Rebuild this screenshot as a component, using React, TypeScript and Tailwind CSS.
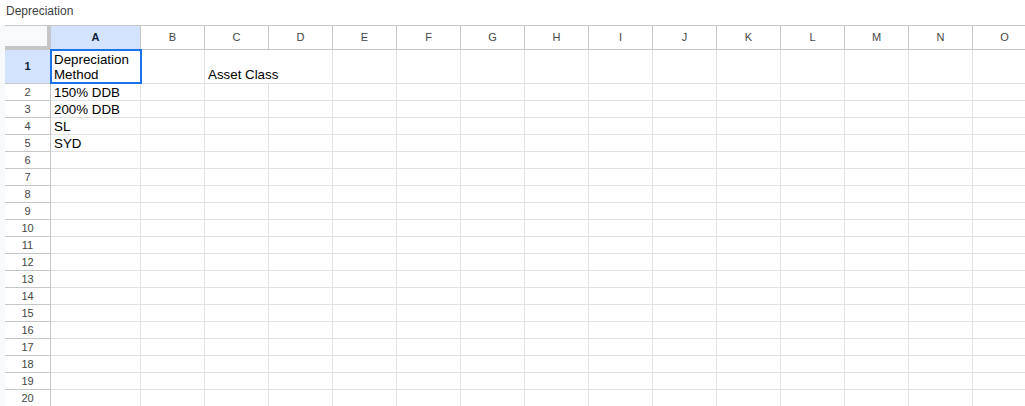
const columns = ['A', 'B', 'C', 'D', 'E', 'F', 'G', 'H', 'I', 'J', 'K', 'L', 'M', 'N', 'O'];

const cells: Record<string, string> = {
  A2: '150% DDB',
  A3: '200% DDB',
  A4: 'SL',
  A5: 'SYD',
};

const rows = Array.from({ length: 20 }, (_, i) => i + 1);

function colWidth(col: string) {
  return col === 'A' ? 'w-[90px]' : 'w-[64px]';
}

export default function App() {
  return (
    <div className="w-[1025px] h-[406px] overflow-hidden bg-white font-['Liberation_Sans',Arial,sans-serif] text-black">
      <div className="h-[25px] pl-[6px] pt-[2px] text-[12px] text-[#3c4043]">Depreciation</div>

      <div className="flex">
        <div className="w-[5px] shrink-0 bg-[#f8f9fa]" />
        <div className="flex flex-col">
          {/* column headers */}
          <div className="flex h-[25px] border-t border-[#c4c7c5]">
            <div className="w-[46px] shrink-0 bg-[#f8f9fa] border-r-[4px] border-b-[4px] border-[#c4c7c5]" />
            {columns.map((col) => (
              <div
                key={col}
                className={`${colWidth(col)} shrink-0 flex items-center justify-center border-r border-b border-[#c4c7c5] text-[11px] ${
                  col === 'A' ? 'bg-[#d3e3fd] font-bold text-[#0b1f3d]' : 'text-[#444746]'
                }`}
              >
                {col}
              </div>
            ))}
          </div>

          {rows.map((row) => (
            <div key={row} className={`flex ${row === 1 ? 'h-[34px]' : 'h-[17px]'}`}>
              <div
                className={`w-[46px] shrink-0 flex items-center justify-center border-r border-b border-[#c4c7c5] text-[11px] ${
                  row === 1 ? 'bg-[#d3e3fd] font-bold text-[#0b1f3d]' : 'text-[#444746]'
                }`}
              >
                {row}
              </div>
              {columns.map((col) => {
                const id = `${col}${row}`;
                if (id === 'A1') {
                  return (
                    <div key={id} className="relative w-[90px] shrink-0 border-r border-b border-[#e1e1e1] px-[3px] pt-[2px] text-[13.33px] leading-[15px]">
                      Depreciation
                      <br />
                      Method
                      <div className="absolute -left-px -top-px w-[92px] h-[35px] border-2 border-[#1a73e8]" />
                    </div>
                  );
                }
                if (id === 'C1') {
                  return (
                    <div key={id} className="w-[64px] shrink-0 flex items-end whitespace-nowrap border-b border-[#e1e1e1] px-[3px] text-[13.33px] leading-[16px]">
                      Asset Class
                    </div>
                  );
                }
                return (
                  <div
                    key={id}
                    className={`${colWidth(col)} shrink-0 border-r border-b border-[#e1e1e1] px-[3px] pt-px text-[13.33px] leading-[15px] whitespace-nowrap`}
                  >
                    {cells[id] ?? ''}
                  </div>
                );
              })}
            </div>
          ))}
        </div>
      </div>
    </div>
  );
}
